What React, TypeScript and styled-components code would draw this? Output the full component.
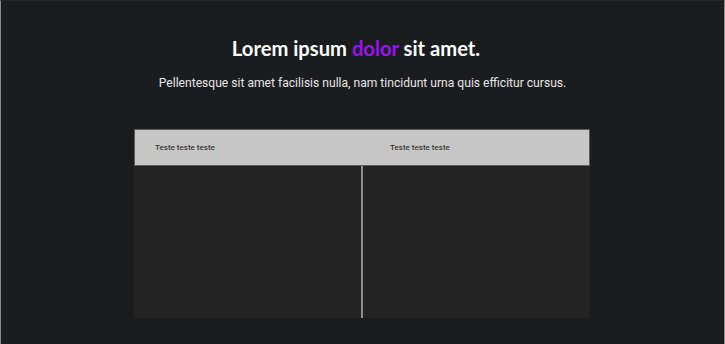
import React from "react";
import styled, { createGlobalStyle } from "styled-components";

const Global = createGlobalStyle`
  html, body { margin: 0; padding: 0; background: #1b1c1e; }
  body { font-family: Roboto, "Liberation Sans", sans-serif; }
`;

const Page = styled.div`
  box-sizing: border-box;
  width: 725px;
  height: 344px;
  background: #1b1c1e;
  border-left: 1px solid #8a8a8a;
  border-right: 1px solid #8a8a8a;
  border-top: 1px solid #26272a;
  display: flex;
  flex-direction: column;
  align-items: center;
  padding-top: 35px;
`;

const Title = styled.h1`
  margin: 0 13px 0 0;
  font-family: Lato, "Open Sans", sans-serif;
  font-weight: 700;
  font-size: 20.2px;
  line-height: 24px;
  color: #ffffff;
`;

const Accent = styled.span`
  color: #9b12f2;
`;

const Subtitle = styled.p`
  margin: 14px 0 0;
  font-family: Roboto, sans-serif;
  font-size: 12.1px;
  line-height: 18px;
  color: #e6e6e6;
`;

const Table = styled.div`
  margin-top: 37px;
  margin-right: 1px;
  width: 456px;
  display: grid;
  grid-template-columns: 227px 2px 227px;
  grid-template-rows: 37px 152px;
  background: #232323;
`;

const Header = styled.div`
  grid-column: 1 / 4;
  display: grid;
  grid-template-columns: 228px 228px;
  background: #c6c6c6;
  border: 1px solid #5c5c5c;
  box-sizing: border-box;
`;

const HeadCell = styled.div<{ $pad: number }>`
  display: flex;
  align-items: center;
  padding-left: ${(p) => p.$pad}px;
  font-family: Roboto, sans-serif;
  font-weight: 500;
  font-size: 8px;
  color: #3a3a3a;
`;

const Cell = styled.div`
  background: #232323;
`;

const Divider = styled.div`
  background: #8c8c8c;
`;

export default function App() {
  return (
    <>
      <Global />
      <Page>
        <Title>
          Lorem ipsum <Accent>dolor</Accent> sit amet.
        </Title>
        <Subtitle>
          Pellentesque sit amet facilisis nulla, nam tincidunt urna quis efficitur cursus.
        </Subtitle>
        <Table>
          <Header>
            <HeadCell $pad={20}>Teste teste teste</HeadCell>
            <HeadCell $pad={27}>Teste teste teste</HeadCell>
          </Header>
          <Cell />
          <Divider />
          <Cell />
        </Table>
      </Page>
    </>
  );
}
